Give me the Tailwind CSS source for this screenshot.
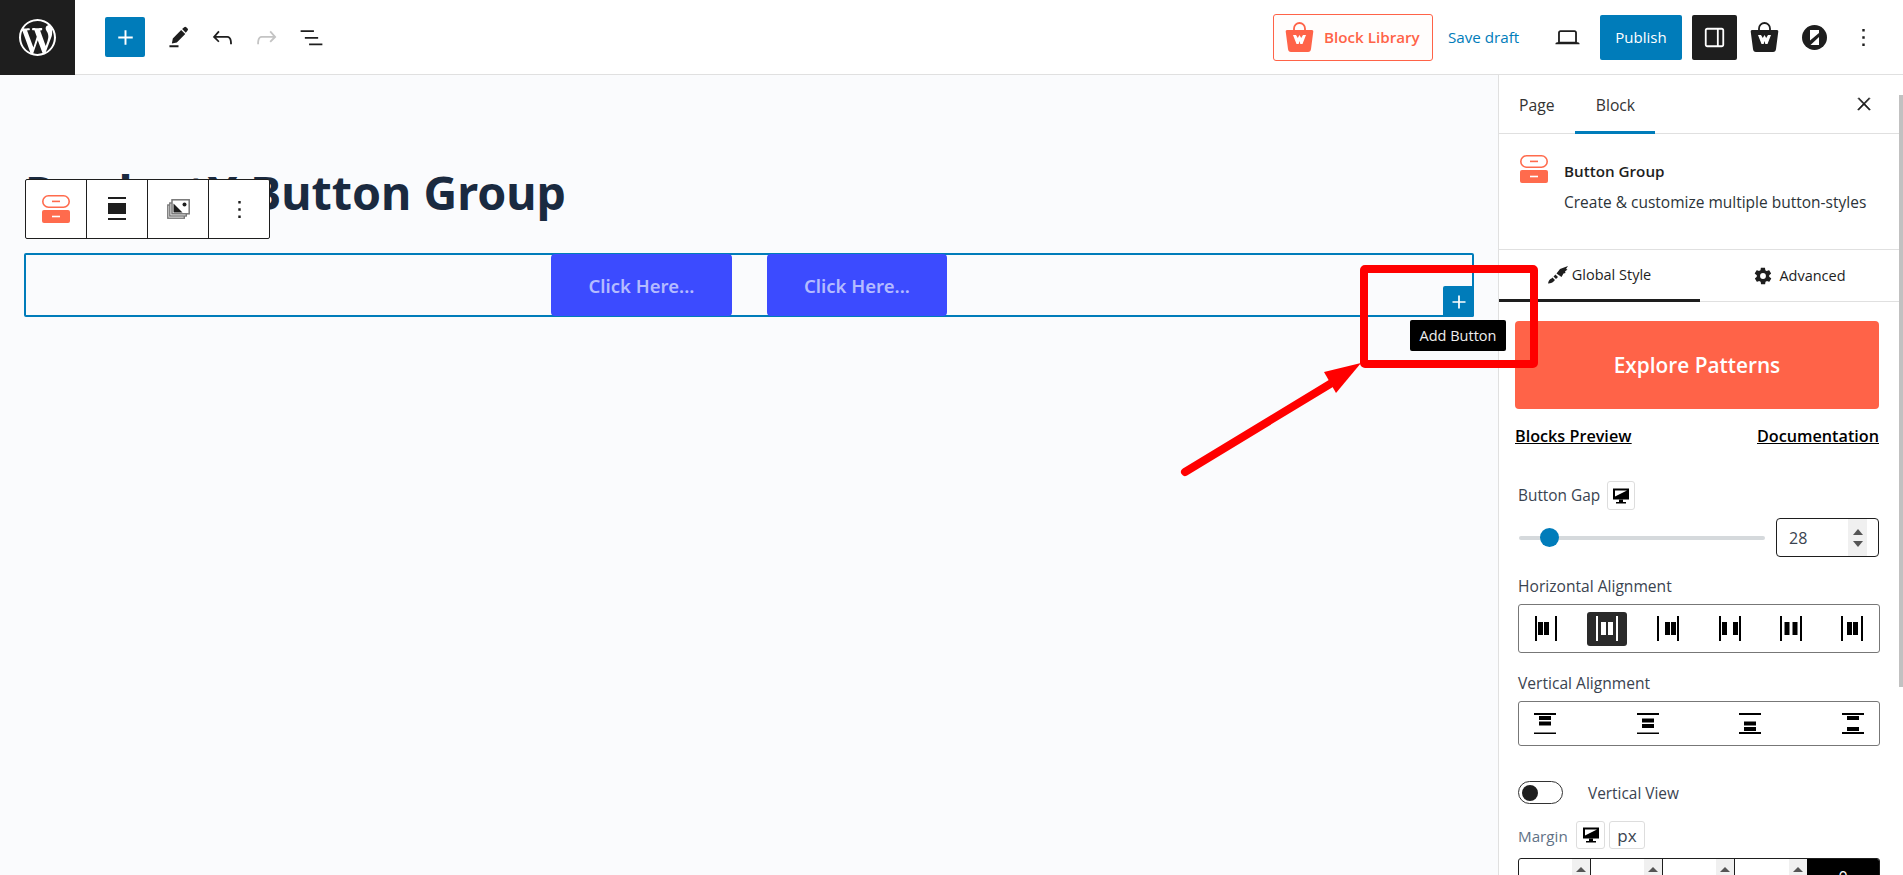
<!DOCTYPE html>
<html lang="en">
<head>
  <meta charset="UTF-8" />
  <title>ProductX Button Group</title>
  <script src="https://cdn.jsdelivr.net/npm/@tailwindcss/browser@4"></script>
</head>
<body class="h-screen overflow-hidden bg-white font-['Open_Sans',sans-serif] text-[#1e1e1e]">
  <div class="relative flex h-[875px] w-[1903px] flex-col overflow-hidden">

    <!-- top bar -->
    <header class="flex h-[75px] shrink-0 items-center border-b border-[#e0e0e0] bg-white">
      <div class="flex h-[75px] w-[75px] shrink-0 items-center justify-center bg-[#1e1e1e]">
        <svg class="h-[37px] w-[37px] fill-white" viewBox="0 0 20 20"><path d="M20 10c0-5.51-4.49-10-10-10C4.48 0 0 4.49 0 10c0 5.52 4.48 10 10 10 5.51 0 10-4.48 10-10zM7.78 15.37L4.37 6.22c.55-.02 1.17-.08 1.17-.08.5-.06.44-1.13-.06-1.11 0 0-1.45.11-2.37.11-.18 0-.37 0-.58-.01C4.12 2.69 6.87 1.11 10 1.11c2.33 0 4.45.87 6.05 2.34-.68-.11-1.65.39-1.65 1.58 0 .74.45 1.36.9 2.1.35.61.55 1.36.55 2.46 0 1.49-1.4 5-1.4 5l-3.03-8.37c.54-.02.82-.17.82-.17.5-.05.44-1.25-.06-1.22 0 0-1.44.12-2.38.12-.87 0-2.33-.12-2.33-.12-.5-.03-.56 1.2-.06 1.22l.92.08 1.26 3.41zM17.41 10c.24-.64.74-1.87.43-4.25.7 1.29 1.05 2.71 1.05 4.25 0 3.29-1.73 6.24-4.4 7.78.97-2.59 1.94-5.2 2.92-7.78zM6.1 18.09C3.12 16.65 1.11 13.53 1.11 10c0-1.3.23-2.48.72-3.59C3.25 10.3 4.67 14.2 6.1 18.09zm4.03-6.63l2.58 6.98c-.86.29-1.76.45-2.71.45-.79 0-1.57-.11-2.29-.33.81-2.38 1.62-4.74 2.42-7.1z"/></svg>
      </div>
      <button class="ml-[30px] flex h-[40px] w-[40px] items-center justify-center rounded-[2px] bg-[#007cba]">
        <svg class="h-[29px] w-[29px] fill-white" viewBox="0 0 24 24"><path d="M18 11.2h-5.2V6h-1.6v5.2H6v1.6h5.2V18h1.6v-5.2H18z"/></svg>
      </button>
      <svg class="ml-[19px] h-[29px] w-[29px] fill-[#1e1e1e]" viewBox="0 0 24 24"><path d="M4.500 20h7.500v-1.500H4.500zM6.500 17l.8-4.200 6.900-7 3.400 3.400-7 6.900zM15 5l1.700-1.500q.9-.7 1.700 0l1.100 1.100q.8.800 0 1.700L18 8z"/></svg>
      <svg class="ml-[15px] h-[29px] w-[29px] fill-[#1e1e1e]" viewBox="0 0 24 24"><path d="M18.3 11.7c-.6-.6-1.4-.9-2.3-.9H6.7l2.9-3.3-1.1-1-4.5 5L8.5 16l1-1-2.7-2.7H16c.5 0 .9.2 1.3.5 1 1 1 3.4 1 4.5v.3h1.5v-.2c0-1.5 0-4.3-1.5-5.7z"/></svg>
      <svg class="ml-[15px] h-[29px] w-[29px] fill-[#c4c4c4]" viewBox="0 0 24 24"><path d="M15.6 6.5l-1.1 1 2.9 3.3H8c-.9 0-1.7.3-2.3.9-1.4 1.5-1.4 4.2-1.4 5.6v.2h1.5v-.3c0-1.1 0-3.5 1-4.5.3-.3.7-.5 1.3-.5h9.2L14.5 15l1.1 1.1 4.6-4.6-4.6-5z"/></svg>
      <svg class="ml-[16px] h-[29px] w-[29px] fill-[#1e1e1e]" viewBox="0 0 24 24"><path d="M3 6h11v1.5H3V6zm3.5 5.5h11V13h-11v-1.5zM21 17H10v1.5h11V17z"/></svg>

      <div class="ml-auto flex items-center">
        <button class="flex h-[47px] w-[160px] items-center rounded-[3px] border border-[#ff6348] bg-[#fffdfc] pl-[11px] text-[15.2px] font-semibold text-[#ff6348]">
          <svg class="h-[30px] w-[29px]" viewBox="0 0 29 30"><path d="M9 9V6.500a5.500 5.500 0 0 1 11 0V9" fill="none" stroke="#ff6348" stroke-width="1.800"/><path d="M2 8h25q1.500 0 1.300 1.500L26 27q-.3 3-3 3H6q-2.700 0-3-3L.7 9.500Q.5 8 2 8z" fill="#ff6348"/><path d="M8 13l3 .0 1.800 3 1.700-3 1.700 3 1.800-3 3 0-3.500 9h-2.200l-.8-3-.8 3h-2.200z" fill="#fff"/></svg>
          <span class="ml-[10px]">Block Library</span>
        </button>
        <span class="ml-[15px] w-[76px] text-[15.2px] text-[#007cba]">Save draft</span>
        <svg class="ml-[29px] h-[29px] w-[29px] fill-[#1e1e1e]" viewBox="0 0 24 24"><path d="M20.500 16h-.7V8c0-1.100-.9-2-2-2H6.200c-1.100 0-2 .9-2 2v8h-.7c-.8 0-1.500.7-1.500 1.500h20c0-.8-.7-1.500-1.500-1.500zM5.700 8c0-.3.2-.5.5-.5h11.600c.3 0 .5.2.5.5v7.600H5.700V8z"/></svg>
        <button class="ml-[18px] h-[45px] w-[82px] rounded-[2px] bg-[#007cba] text-[15px] text-white">Publish</button>
        <button class="ml-[10px] flex h-[45px] w-[45px] items-center justify-center rounded-[2px] bg-[#1e1e1e]">
          <svg class="h-[29px] w-[29px] fill-white" viewBox="0 0 24 24"><path d="M18 4H6c-1.100 0-2 .9-2 2v12c0 1.100.9 2 2 2h12c1.100 0 2-.9 2-2V6c0-1.100-.9-2-2-2zm-4 14.500H6c-.3 0-.5-.2-.5-.5V6c0-.3.2-.5.5-.5h8v13zm4.500-.5c0 .3-.2.5-.5.5h-2.500v-13H18c.3 0 .5.2.5.5v12z"/></svg>
        </button>
        <svg class="ml-[13px] h-[30px] w-[29px]" viewBox="0 0 29 30"><path d="M9 9V6.500a5.500 5.500 0 0 1 11 0V9" fill="none" stroke="#1e1e1e" stroke-width="1.800"/><path d="M2 8h25q1.500 0 1.300 1.500L26 27q-.3 3-3 3H6q-2.700 0-3-3L.7 9.500Q.5 8 2 8z" fill="#1e1e1e"/><path d="M8 13l3 .0 1.800 3 1.700-3 1.700 3 1.800-3 3 0-3.500 9h-2.200l-.8-3-.8 3h-2.200z" fill="#fff"/></svg>
        <svg class="ml-[23px] h-[25px] w-[25px]" viewBox="0 0 25 25"><circle cx="12.500" cy="12.500" r="12.500" fill="#1e1e1e"/><path d="M8 5h9v3L8 15.500zM17 20H8.500l8.500-8z" fill="#fff"/></svg>
        <svg class="ml-[22px] mr-[25px] h-[29px] w-[29px] fill-[#1e1e1e]" viewBox="0 0 24 24"><path d="M13 19h-2v-2h2v2zm0-6h-2v-2h2v2zm0-6h-2V5h2v2z"/></svg>
      </div>
    </header>

    <div class="flex min-h-0 flex-1">
      <!-- canvas -->
      <main class="relative flex-1 bg-[#fafbfd]">
        <h1 class="ml-[25px] mt-[82px] text-[46.6px] leading-[70px] font-bold text-[#1a2a40] font-['Noto_Sans',sans-serif]">ProductX Button Group</h1>
        <div class="relative ml-[24px] mt-[26px] flex h-[64px] w-[1450px] items-center justify-center gap-[35px] rounded-[2px] border-2 border-[#007cba]">
          <a class="flex h-[62px] w-[181px] items-center justify-center rounded-[4px] bg-[#3c4bff] pt-[2px] text-[18.5px] font-semibold text-[#b4bbff] font-['Noto_Sans',sans-serif]">Click Here...</a>
          <a class="flex h-[62px] w-[180px] items-center justify-center rounded-[4px] bg-[#3c4bff] pt-[2px] text-[18.5px] font-semibold text-[#b4bbff] font-['Noto_Sans',sans-serif]">Click Here...</a>
          <button class="absolute right-[-2px] bottom-[-2px] flex h-[31px] w-[31px] items-center justify-center rounded-[2px] bg-[#007cba]">
            <svg class="h-[26px] w-[26px] fill-white" viewBox="0 0 24 24"><path d="M18 11.200h-5.200V6h-1.600v5.200H6v1.600h5.200V18h1.600v-5.200H18z"/></svg>
          </button>
          <div class="absolute left-[1384px] top-[65px] flex h-[31px] w-[96px] items-center justify-center rounded-[2px] bg-black text-[14.5px] text-[#eee]">Add Button</div>
        </div>

        <!-- block toolbar -->
        <div class="absolute left-[25px] top-[104px] flex h-[60px] w-[245px] rounded-[2px] border border-[#1e1e1e] bg-white">
          <div class="flex w-[61px] items-center justify-center border-r border-[#1e1e1e]">
            <svg class="h-[30px] w-[28px]" viewBox="0 0 28 28"><rect x=".8" y=".8" width="26.400" height="11.400" rx="5.700" fill="#fff" stroke="#ff6b4d" stroke-width="1.600"/><rect x="10" y="5.600" width="8" height="1.600" fill="#ff6b4d"/><rect y="15" width="28" height="13" rx="2" fill="#ff6b4d"/><rect x="10" y="20.700" width="8" height="1.600" fill="#fff"/></svg>
          </div>
          <div class="flex w-[61px] items-center justify-center border-r border-[#1e1e1e]">
            <svg class="h-[24px] w-[18px]" viewBox="0 0 18 24"><rect width="18" height="2" fill="#1e1e1e"/><rect y="6" width="18" height="11" fill="#1e1e1e"/><rect y="21" width="18" height="2" fill="#1e1e1e"/></svg>
          </div>
          <div class="flex w-[61px] items-center justify-center border-r border-[#1e1e1e]">
            <svg class="h-[20px] w-[23px]" viewBox="0 0 23 20"><rect x=".8" y="6" width="16.500" height="13.200" fill="#fff" stroke="#777" stroke-width="1.400"/><rect x="2.800" y="4" width="16.500" height="13" fill="#fff" stroke="#777" stroke-width="1.400"/><rect x="5" y=".8" width="17.200" height="14" fill="#fff" stroke="#777" stroke-width="1.500"/><path d="M6.500 13.500V4.500l9 9z" fill="#1e1e1e"/><circle cx="17.500" cy="5.500" r="2" fill="#1e1e1e"/></svg>
          </div>
          <div class="flex flex-1 items-center justify-center">
            <svg class="h-[29px] w-[29px] fill-[#1e1e1e]" viewBox="0 0 24 24"><path d="M13 19h-2v-2h2v2zm0-6h-2v-2h2v2zm0-6h-2V5h2v2z"/></svg>
          </div>
        </div>
      </main>

      <!-- settings sidebar -->
      <aside class="flex w-[405px] shrink-0 border-l border-[#e0e0e0] bg-white">
        <div class="w-[400px] shrink-0">
          <div class="flex h-[59px] items-start border-b border-[#e0e0e0]">
            <span class="ml-[20px] mt-[19px] text-[15.7px] text-[#333]">Page</span>
            <div class="ml-[21px] flex h-[59px] w-[80px] justify-center border-b-[3px] border-[#007cba] pt-[19px] text-[15.7px] text-[#333]">Block</div>
            <svg class="ml-auto mr-[25px] mt-[19px] h-[20px] w-[20px] fill-[#1e1e1e]" viewBox="0 0 24 24"><path d="M13 11.800l6.100-6.300-1-1-6.100 6.200-6.100-6.200-1 1 6.100 6.300-6.500 6.700 1 1 6.500-6.600 6.500 6.600 1-1z" stroke="#1e1e1e" stroke-width=".8"/></svg>
          </div>
          <div class="flex h-[116px] border-b border-[#e0e0e0] pl-[21px] pt-[21px]">
            <svg class="h-[28px] w-[28px]" viewBox="0 0 28 28"><rect x=".8" y=".8" width="26.400" height="11.400" rx="5.700" fill="#fff" stroke="#ff6b4d" stroke-width="1.600"/><rect x="10" y="5.600" width="8" height="1.600" fill="#ff6b4d"/><rect y="15" width="28" height="13" rx="2" fill="#ff6b4d"/><rect x="10" y="20.700" width="8" height="1.600" fill="#fff"/></svg>
            <div class="ml-[16px] text-[15.5px]">
              <p class="mt-[6px] h-[20px] text-[15.2px] leading-[20px] font-semibold">Button Group</p>
              <p class="mt-[11px] leading-[20px] text-[#2c3338]">Create &amp; customize multiple button-styles</p>
            </div>
          </div>
          <div class="flex h-[52px] border-b border-[#e0e0e0] text-[14.5px]">
            <div class="-mb-px flex w-[201px] items-center justify-center border-b-[3px] border-[#1e1e1e] pt-[1px]">
              <svg class="h-[18px] w-[20px] fill-[#1e1e1e]" viewBox="0 0 20 18"><path d="M0 17.500c.5-3 2-4.500 3.500-5l1-1 2.500 2.500-1 1c-1 1.500-3 2.500-6 2.500zM5.500 10.500l2-2 2.500 2.500-2 2zM8.500 7.500l3.500-4.500 8-3-2 3 1.500.5-2.500 2 .5 1.500-2 .5-2 3.500z"/></svg>
              <span class="ml-[4px]">Global Style</span>
            </div>
            <div class="flex flex-1 items-center justify-center">
              <svg class="h-[20px] w-[20px] fill-[#1e1e1e]" viewBox="0 0 24 24"><path d="M19.400 13c.04-.3.1-.7.1-1s-.04-.7-.1-1l2.100-1.600c.2-.1.2-.4.1-.6l-2-3.500c-.1-.2-.4-.3-.6-.2l-2.500 1c-.5-.4-1.100-.7-1.700-1l-.4-2.600c0-.3-.2-.5-.5-.5h-4c-.3 0-.5.2-.5.4l-.4 2.700c-.6.2-1.100.6-1.700 1l-2.500-1c-.2-.1-.5 0-.6.2l-2 3.500c-.1.200-.1.500.1.600L4.600 11c0 .3-.1.700-.1 1s0 .7.1 1l-2.100 1.600c-.2.100-.2.400-.1.600l2 3.500c.1.200.4.300.6.200l2.500-1c.5.400 1.100.7 1.700 1l.4 2.600c0 .3.200.5.500.5h4c.3 0 .5-.2.500-.4l.4-2.700c.6-.2 1.100-.6 1.700-1l2.500 1c.2.100.5 0 .6-.2l2-3.500c.1-.2.1-.5-.1-.6zM12 15.500a3.500 3.500 0 1 1 0-7 3.500 3.500 0 0 1 0 7z"/></svg>
              <span class="ml-[6px]">Advanced</span>
            </div>
          </div>

          <div class="px-[16px] pt-[19px]">
            <button class="flex h-[88px] w-[364px] items-center justify-center rounded-[4px] bg-[#ff6348] pt-[2px] text-[20.8px] font-semibold text-white">Explore Patterns</button>
            <div class="mt-[15px] flex w-[364px] justify-between text-[16.2px] font-semibold text-black underline">
              <a>Blocks Preview</a><a>Documentation</a>
            </div>
          </div>

          <div class="pl-[19px] pr-[19px]">
            <div class="mt-[33px] flex h-[29px] items-center text-[15.4px] text-[#3a4350]">
              <span>Button Gap</span>
              <span class="ml-[7px] flex h-[29px] w-[28px] items-center justify-center rounded-[3px] border border-[#ddd]">
                <svg class="h-[18px] w-[18px]" viewBox="0 0 18 18"><path d="M1 1.500h16v11H1z" fill="#000"/><path d="M3 3.500h12l-12 6z" fill="#fff"/><path d="M7 12.500h4V15h3v1.500H4V15h3z" fill="#000"/></svg>
              </span>
            </div>
            <div class="mt-[8px] flex h-[39px] items-center">
              <div class="relative ml-[1px] h-[4px] w-[246px] shrink-0 rounded-full bg-[#d5d9dc]">
                <span class="absolute left-[21px] top-[-8px] h-[19px] w-[19px] rounded-full bg-[#007cba]"></span>
              </div>
              <div class="ml-[11px] flex h-[39px] w-[103px] shrink-0 items-center justify-between overflow-hidden rounded-[4px] border border-[#1e1e1e] pl-[12px] pr-[11px] text-[16px] text-[#3a4350]">
                <span>28</span>
                <span class="flex h-full w-[19px] flex-col items-center justify-center gap-[6px] bg-[#f0f0f0]">
                  <span class="h-0 w-0 border-x-[5px] border-b-[6px] border-x-transparent border-b-[#555]"></span>
                  <span class="h-0 w-0 border-x-[5px] border-t-[6px] border-x-transparent border-t-[#555]"></span>
                </span>
              </div>
            </div>

            <p class="mt-[19px] h-[20px] text-[15.6px] leading-[20px] text-[#3a4350]">Horizontal Alignment</p>
            <div class="mt-[8px] flex h-[49px] w-[362px] items-center justify-between rounded-[3px] border border-[#777] px-[7px]">
              <span class="flex h-[34px] w-[40px] items-center justify-center"><svg class="h-[25px] w-[22px]" viewBox="0 0 22 25"><rect width="2" height="25" fill="#000"/><rect x="20" width="2" height="25" fill="#000"/><rect x="3" y="6" width="5" height="13" fill="#000"/><rect x="9" y="6" width="5" height="13" fill="#000"/></svg></span>
              <span class="flex h-[34px] w-[40px] items-center justify-center rounded-[3px] bg-[#2a2a2a]"><svg class="h-[25px] w-[22px]" viewBox="0 0 22 25"><rect width="2" height="25" fill="#fff"/><rect x="20" width="2" height="25" fill="#fff"/><rect x="5" y="6" width="5" height="13" fill="#fff"/><rect x="12" y="6" width="5" height="13" fill="#fff"/></svg></span>
              <span class="flex h-[34px] w-[40px] items-center justify-center"><svg class="h-[25px] w-[22px]" viewBox="0 0 22 25"><rect width="2" height="25" fill="#000"/><rect x="20" width="2" height="25" fill="#000"/><rect x="8" y="6" width="5" height="13" fill="#000"/><rect x="14" y="6" width="5" height="13" fill="#000"/></svg></span>
              <span class="flex h-[34px] w-[40px] items-center justify-center"><svg class="h-[25px] w-[22px]" viewBox="0 0 22 25"><rect width="2" height="25" fill="#000"/><rect x="20" width="2" height="25" fill="#000"/><rect x="3" y="6" width="5" height="13" fill="#000"/><rect x="14" y="6" width="5" height="13" fill="#000"/></svg></span>
              <span class="flex h-[34px] w-[40px] items-center justify-center"><svg class="h-[25px] w-[22px]" viewBox="0 0 22 25"><rect width="2" height="25" fill="#000"/><rect x="20" width="2" height="25" fill="#000"/><rect x="4.500" y="6" width="5" height="13" fill="#000"/><rect x="12.500" y="6" width="5" height="13" fill="#000"/></svg></span>
              <span class="flex h-[34px] w-[40px] items-center justify-center"><svg class="h-[25px] w-[22px]" viewBox="0 0 22 25"><rect width="2" height="25" fill="#000"/><rect x="20" width="2" height="25" fill="#000"/><rect x="6" y="6" width="5" height="13" fill="#000"/><rect x="12" y="6" width="5" height="13" fill="#000"/></svg></span>
            </div>

            <p class="mt-[20px] h-[20px] text-[15.6px] leading-[20px] text-[#3a4350]">Vertical Alignment</p>
            <div class="mt-[8px] flex h-[45px] w-[362px] items-center justify-between rounded-[3px] border border-[#777] px-[15px]">
              <svg class="h-[21px] w-[22px]" viewBox="0 0 22 21"><rect width="22" height="2" fill="#000"/><rect y="19.500" width="22" height="1.500" fill="#000"/><rect x="5" y="3" width="12" height="4" fill="#000"/><rect x="5" y="8.500" width="12" height="4" fill="#000"/></svg>
              <svg class="h-[21px] w-[22px]" viewBox="0 0 22 21"><rect width="22" height="2" fill="#000"/><rect y="19.500" width="22" height="1.500" fill="#000"/><rect x="5" y="5.500" width="12" height="4" fill="#000"/><rect x="5" y="11" width="12" height="4" fill="#000"/></svg>
              <svg class="h-[21px] w-[22px]" viewBox="0 0 22 21"><rect width="22" height="2" fill="#000"/><rect y="19" width="22" height="2" fill="#000"/><rect x="5" y="8.500" width="12" height="4" fill="#000"/><rect x="5" y="14" width="12" height="4" fill="#000"/></svg>
              <svg class="h-[21px] w-[22px]" viewBox="0 0 22 21"><rect width="22" height="2" fill="#000"/><rect y="19" width="22" height="2" fill="#000"/><rect x="5" y="3" width="12" height="4" fill="#000"/><rect x="5" y="14" width="12" height="4" fill="#000"/></svg>
            </div>

            <div class="mt-[35px] flex h-[23px] items-center">
              <span class="flex h-[23px] w-[45px] items-center rounded-full border border-[#333] pl-[3px]"><span class="h-[16px] w-[16px] rounded-full bg-[#1e1e1e]"></span></span>
              <span class="ml-[25px] pt-[2px] text-[15.4px] text-[#3a4350]">Vertical View</span>
            </div>

            <div class="mt-[17px] flex h-[28px] items-center text-[15.2px]">
              <span class="w-[58px] pt-[2px] text-[#5f7186]">Margin</span>
              <span class="flex h-[28px] w-[29px] items-center justify-center rounded-[3px] border border-[#ddd]">
                <svg class="h-[18px] w-[18px]" viewBox="0 0 18 18"><path d="M1 1.500h16v11H1z" fill="#000"/><path d="M3 3.500h12l-12 6z" fill="#fff"/><path d="M7 12.500h4V15h3v1.500H4V15h3z" fill="#000"/></svg>
              </span>
              <span class="ml-[4px] flex h-[28px] w-[36px] items-center justify-center rounded-[3px] border border-[#ddd] text-[17px] text-[#3a4350]">px</span>
            </div>

            <div class="mt-[9px] flex h-[40px] w-[362px] overflow-hidden rounded-[3px] border border-[#1e1e1e]">
              <span class="flex w-[72px] justify-end border-r border-[#1e1e1e]"><span class="flex h-full w-[18px] justify-center bg-[#f0f0f0] pt-[8px]"><span class="h-0 w-0 border-x-[5px] border-b-[5px] border-x-transparent border-b-[#555]"></span></span></span>
              <span class="flex w-[72px] justify-end border-r border-[#1e1e1e]"><span class="flex h-full w-[18px] justify-center bg-[#f0f0f0] pt-[8px]"><span class="h-0 w-0 border-x-[5px] border-b-[5px] border-x-transparent border-b-[#555]"></span></span></span>
              <span class="flex w-[72px] justify-end border-r border-[#1e1e1e]"><span class="flex h-full w-[18px] justify-center bg-[#f0f0f0] pt-[8px]"><span class="h-0 w-0 border-x-[5px] border-b-[5px] border-x-transparent border-b-[#555]"></span></span></span>
              <span class="flex w-[72px] justify-end"><span class="flex h-full w-[18px] justify-center bg-[#f0f0f0] pt-[8px]"><span class="h-0 w-0 border-x-[5px] border-b-[5px] border-x-transparent border-b-[#555]"></span></span></span>
              <span class="flex flex-1 justify-center bg-black pt-[6px] text-[16px] text-white">0</span>
            </div>
          </div>
        </div>
        <div class="w-[4px] shrink-0 bg-white"><div class="mt-[20px] h-[592px] bg-[#c1c1c1]"></div></div>
      </aside>
    </div>

    <!-- red annotation drawn over the screen -->
    <svg class="pointer-events-none absolute left-0 top-0 z-10 h-[875px] w-[1903px]" viewBox="0 0 1903 875" fill="none">
      <rect x="1364" y="269" width="170" height="95" rx="1" stroke="#ff0000" stroke-width="8"/>
      <path d="M1185 472L1335 381" stroke="#ff0000" stroke-width="8" stroke-linecap="round"/>
      <path d="M1324 372L1361 363L1336 393z" fill="#ff0000"/>
    </svg>
  </div>
</body>
</html>
